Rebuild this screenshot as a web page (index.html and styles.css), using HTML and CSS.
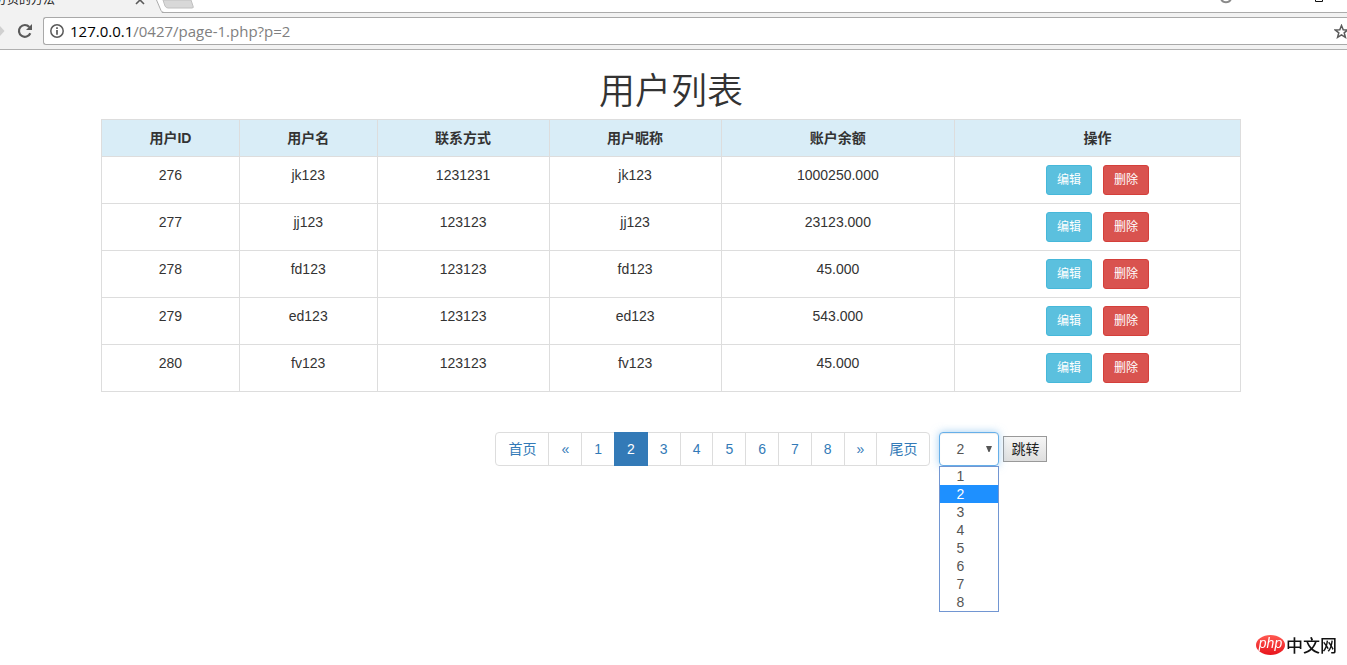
FILE: index.html
```html
<!DOCTYPE html>
<html lang="zh-CN">
<head>
<meta charset="utf-8">
<title>用户列表</title>
<link rel="stylesheet" href="styles.css">
</head>
<body>
<header class="browser">
  <div class="tabs">
    <div class="tab"><span class="tab-title">分页的方法</span></div>
    <svg class="tab-art" width="72" height="13" viewBox="0 0 72 13" aria-hidden="true">
      <path d="M0 0H32L38 13H0Z" fill="#f2f2f2"/>
      <path d="M12 -4L20 4M20 -4L12 4" stroke="#5a5a5a" stroke-width="1.600"/>
      <path d="M32.500 0L37 10.500Q38 12.500 40 12.500H72" fill="none" stroke="#ababab"/>
      <path d="M39 0H67L69 6Q70 8 68 8H44Q42 8 41 6Z" fill="#d8d8d8" stroke="#c0c0c0"/>
    </svg>
    <svg class="window-art" width="130" height="13" viewBox="0 0 130 13" aria-hidden="true">
      <path d="M4 -1A5.500 5.500 0 0 0 14 -1" fill="none" stroke="#8a8a8a" stroke-width="2"/>
      <path d="M98.500 -3V1.500H105.500V-3" fill="none" stroke="#111"/>
    </svg>
  </div>
  <div class="toolbar">
    <svg class="forward" width="5" height="14" viewBox="0 0 5 14" aria-hidden="true"><path d="M0 2L4.500 7L0 12Z" fill="#d0d0d0"/></svg>
    <button class="icon-button" type="button" aria-label="刷新">
      <svg width="16" height="16" viewBox="0 0 16 16"><path d="M13.300 10.200A5.900 5.900 0 1 1 12.300 4" fill="none" stroke="#5a5a5a" stroke-width="2.200"/><path d="M15 1V7H9Z" fill="#5a5a5a"/></svg>
    </button>
    <div class="address">
      <svg width="14" height="14" viewBox="0 0 14 14" aria-hidden="true"><circle cx="7" cy="7" r="6.200" fill="none" stroke="#5a5a5a" stroke-width="1.500"/><path d="M7 6V10.800M7 3.200V5" stroke="#5a5a5a" stroke-width="1.700"/></svg>
      <span class="url"><span class="host">127.0.0.1</span>/0427/page-1.php?p=2</span>
      <svg class="star" width="15" height="15" viewBox="0 0 15 15" aria-hidden="true"><path d="M7.500 1.500L9.200 5.700L13.700 6L10.200 8.800L11.400 13.300L7.500 10.800L3.600 13.300L4.800 8.800L1.300 6L5.800 5.700Z" fill="none" stroke="#5a5a5a" stroke-width="1.500"/></svg>
    </div>
  </div>
</header>
<main class="page">
  <div class="container">
    <h1 class="title">用户列表</h1>
    <table class="users">
      <colgroup><col class="narrow"><col class="narrow"><col class="medium"><col class="medium"><col class="wide"><col></colgroup>
      <thead><tr><th>用户ID</th><th>用户名</th><th>联系方式</th><th>用户昵称</th><th>账户余额</th><th>操作</th></tr></thead>
      <tbody>
        <tr><td>276</td><td>jk123</td><td>1231231</td><td>jk123</td><td>1000250.000</td><td><div class="actions"><button class="btn info" type="button">编辑</button><button class="btn danger" type="button">删除</button></div></td></tr>
        <tr><td>277</td><td>jj123</td><td>123123</td><td>jj123</td><td>23123.000</td><td><div class="actions"><button class="btn info" type="button">编辑</button><button class="btn danger" type="button">删除</button></div></td></tr>
        <tr><td>278</td><td>fd123</td><td>123123</td><td>fd123</td><td>45.000</td><td><div class="actions"><button class="btn info" type="button">编辑</button><button class="btn danger" type="button">删除</button></div></td></tr>
        <tr><td>279</td><td>ed123</td><td>123123</td><td>ed123</td><td>543.000</td><td><div class="actions"><button class="btn info" type="button">编辑</button><button class="btn danger" type="button">删除</button></div></td></tr>
        <tr><td>280</td><td>fv123</td><td>123123</td><td>fv123</td><td>45.000</td><td><div class="actions"><button class="btn info" type="button">编辑</button><button class="btn danger" type="button">删除</button></div></td></tr>
      </tbody>
    </table>
    <div class="pager">
      <nav class="pagination" aria-label="分页">
        <a href="#">首页</a><a href="#">«</a><a href="#">1</a><a class="active" href="#" aria-current="page">2</a><a href="#">3</a><a href="#">4</a><a href="#">5</a><a href="#">6</a><a href="#">7</a><a href="#">8</a><a href="#">»</a><a href="#">尾页</a>
      </nav>
      <form class="jump">
        <div class="picker">
          <select class="page-select" aria-label="页码">
            <option>1</option><option selected>2</option><option>3</option><option>4</option><option>5</option><option>6</option><option>7</option><option>8</option>
          </select>
          <svg class="arrow" width="6" height="6" viewBox="0 0 6 6" aria-hidden="true"><path d="M0 0H6L3.500 6H2.500Z" fill="#555"/></svg>
          <ul class="menu" role="listbox" aria-label="页码">
            <li role="option">1</li><li class="selected" role="option" aria-selected="true">2</li><li role="option">3</li><li role="option">4</li><li role="option">5</li><li role="option">6</li><li role="option">7</li><li role="option">8</li>
          </ul>
        </div>
        <button class="go" type="button">跳转</button>
      </form>
    </div>
  </div>
</main>
<div class="brand"><span class="brand-oval">php</span><span class="brand-name">中文网</span></div>
</body>
</html>
```
FILE: styles.css
```css
* { box-sizing: border-box; }
body {
  margin: 0;
  min-height: 100vh;
  overflow: hidden;
  background: #fff;
  color: #333;
  font: 14px/20px "Liberation Sans", "Noto Sans CJK SC", sans-serif;
}
button, select { font: inherit; margin: 0; }

.browser { border-bottom: 1px solid #b0b0b0; background: #f2f2f2; }
.tabs {
  display: flex;
  height: 13px;
  overflow: hidden;
  background: linear-gradient(#ababab, #ababab) bottom / 100% 1px no-repeat #fff;
}
.tab {
  display: flex;
  align-items: flex-end;
  width: 124px;
  padding-bottom: 5px;
  background: #f2f2f2;
}
.tab-title { margin-left: -5px; font-size: 12px; line-height: 16px; color: #222; }
.window-art { margin-left: auto; }
.tab-art, .window-art { flex: none; }
.toolbar { display: flex; align-items: center; height: 36px; }
.forward { margin-right: 12px; }
.icon-button { display: flex; padding: 0; border: 0; background: none; }
.address {
  display: flex;
  flex: 1;
  align-items: center;
  gap: 6px;
  height: 28px;
  margin-left: 10px;
  padding-left: 6px;
  border: 1px solid #a9a9a9;
  border-right: 0;
  border-radius: 3px 0 0 3px;
  background: #fff;
}
.url { font: 15px/20px "Open Sans", "Noto Sans", sans-serif; color: #808080; }
.host { color: #000; }
.star { margin-left: auto; margin-right: -2px; }

.page { padding: 18px 5px 0 0; }
.container { max-width: 1170px; margin: 0 auto; padding: 0 15px; }
.title {
  margin: 0 0 11px;
  text-align: center;
  font: 350 36px/40px "Noto Sans CJK SC", sans-serif;
}
.users { width: 100%; table-layout: fixed; border-collapse: collapse; text-align: center; }
.narrow { width: 12.1%; }
.medium { width: 15.1%; }
.wide { width: 20.5%; }
.users th, .users td { padding: 8px; border: 1px solid #ddd; vertical-align: top; }
.users th { background: #d9edf7; }
.actions { display: flex; justify-content: center; gap: 11px; }
.btn {
  padding: 5px 10px;
  border: 1px solid;
  border-radius: 3px;
  color: #fff;
  font-size: 12px;
  line-height: 18px;
}
.info { border-color: #46b8da; background: #5bc0de; }
.danger { border-color: #d43f3a; background: #d9534f; }

.pager { display: flex; gap: 9px; margin: 40px 0 0 34.6%; }
.pagination { display: flex; }
.pagination a {
  margin-left: -1px;
  padding: 6px 12px;
  border: 1px solid #ddd;
  color: #337ab7;
  text-decoration: none;
}
.pagination a:first-child { margin-left: 0; border-radius: 4px 0 0 4px; }
.pagination a:last-child { border-radius: 0 4px 4px 0; }
.pagination .active { z-index: 1; border-color: #337ab7; background: #337ab7; color: #fff; }
.jump { display: flex; align-items: center; gap: 4px; }
.picker { position: relative; }
.page-select {
  display: block;
  width: 60px;
  height: 34px;
  padding: 6px 16px;
  border: 1px solid #66afe9;
  border-radius: 4px;
  background: #fff;
  box-shadow: inset 0 1px 1px rgba(0, 0, 0, .075), 0 0 8px rgba(102, 175, 233, .6);
  color: #555;
  appearance: none;
}
.arrow { position: absolute; top: 14px; right: 7px; pointer-events: none; }
.menu {
  position: absolute;
  top: 100%;
  left: 0;
  width: 100%;
  margin: 0;
  padding: 0;
  border: 1px solid #7296d2;
  background: #fff;
  color: #555;
  line-height: 18px;
  list-style: none;
}
.menu li { padding-left: 16px; }
.menu .selected { background: #1e90ff; color: #fff; }
.go {
  height: 26px;
  padding: 0 7px;
  border: 1px solid #999;
  background: linear-gradient(#f6f6f6, #dedede);
  color: #222;
}

.brand { position: fixed; right: 10px; bottom: 10px; display: flex; align-items: center; gap: 1px; }
.brand-oval {
  width: 29px;
  height: 20px;
  border-radius: 50%;
  background: linear-gradient(#ff5a52, #e8141c);
  color: #fff;
  font: italic 14px/17px "Liberation Sans", sans-serif;
  text-align: center;
}
.brand-name { color: #111; font: 500 17px/20px "Noto Sans CJK SC", sans-serif; }
```
